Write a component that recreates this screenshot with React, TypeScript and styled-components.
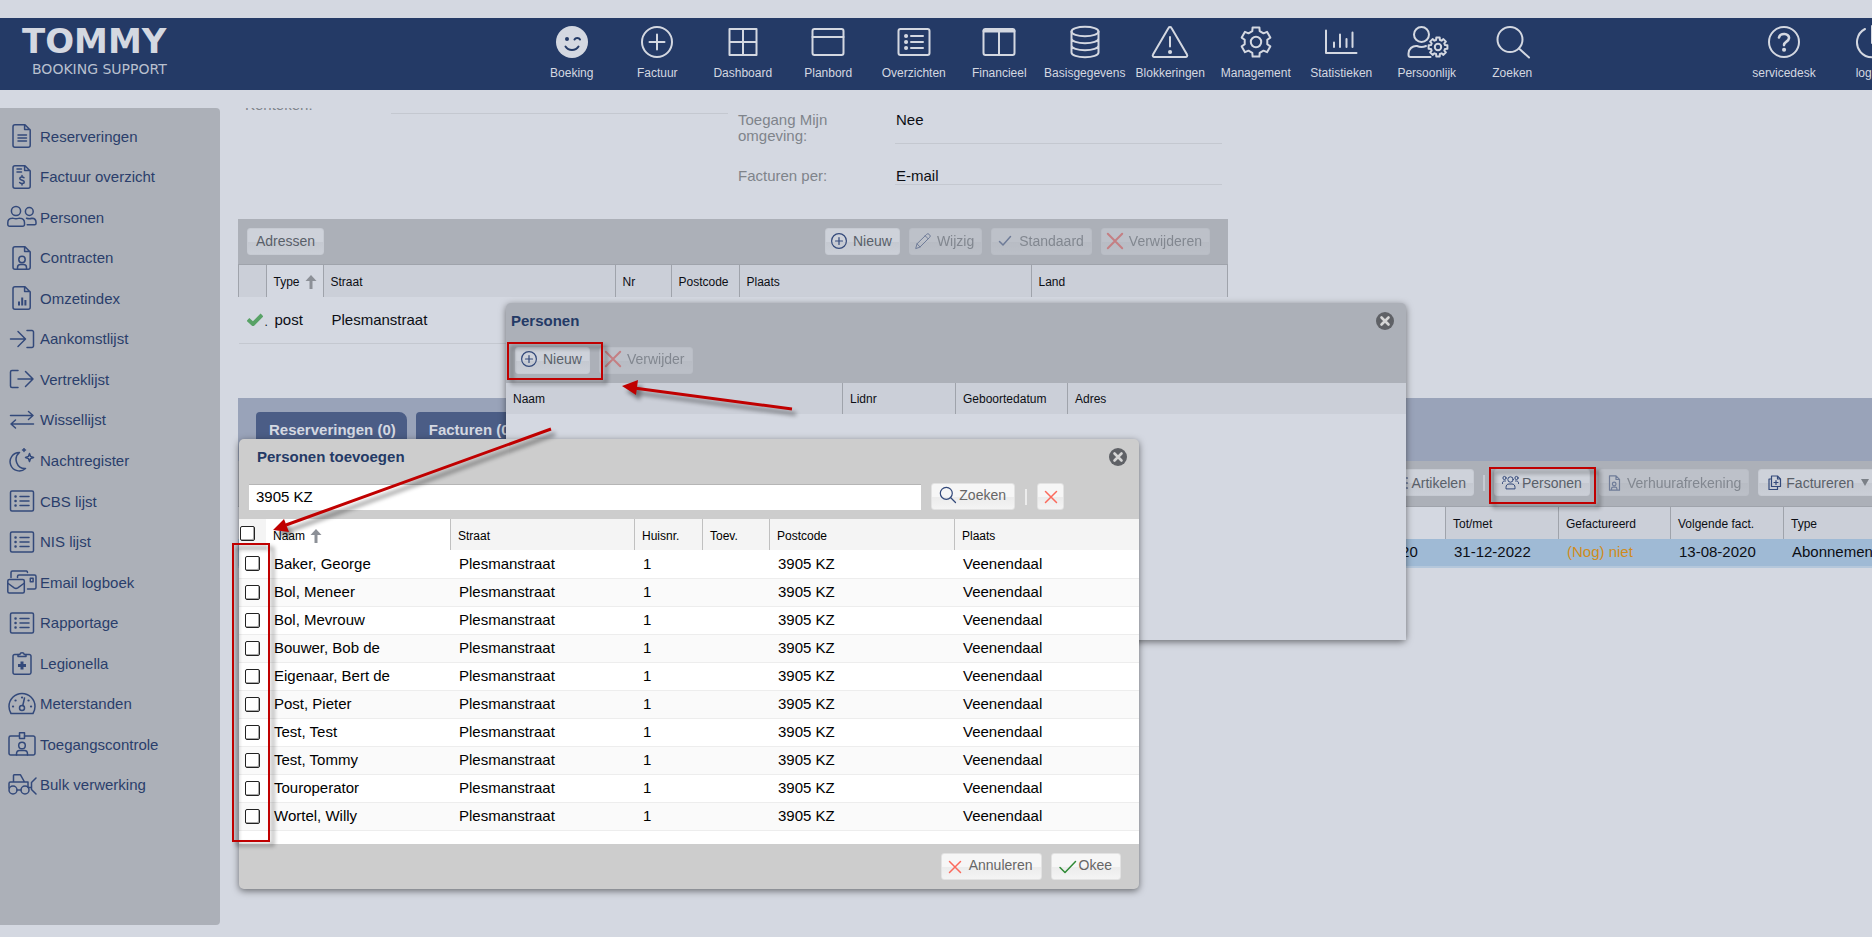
import React from "react";
import styled, { createGlobalStyle, css } from "styled-components";

const c = {
  page: "#d4d8e1",
  navy: "#243a66",
  grey: "#acb0b8",
  head: "#cbcfd8",
  line: "#c4c8d0",
  colLine: "#9fa3ab",
  icon: "#33497a",
  label: "#7f848b",
  red: "#c00000",
};

const GlobalStyle = createGlobalStyle`
  *, *::before, *::after { box-sizing: border-box; }
  html, body { margin: 0; background: ${c.page}; }
  body { font-family: "Liberation Sans", Arial, sans-serif; font-size: 15px; color: #0c0e14; overflow: hidden; }
  button, input { font-family: inherit; margin: 0; }
  ul { list-style: none; margin: 0; padding: 0; }
  h2 { margin: 0; }
`;

/* ---------- page frame ---------- */

const Page = styled.div`
  position: relative;
  min-height: 100vh;
  display: flex;
  flex-direction: column;
  padding: 18px 0 12px;
  overflow: hidden;
`;

const Header = styled.header`
  display: flex;
  height: 72px;
  background: ${c.navy};
  color: ${c.page};
`;

const Logo = styled.a`
  flex: 0 0 529px;
  padding: 3px 0 0 22px;
  display: flex;
  flex-direction: column;
  color: ${c.page};
  text-decoration: none;
  font-family: "DejaVu Sans", sans-serif;
`;

const LogoName = styled.span`
  font-size: 34px;
  line-height: 40px;
  font-weight: 700;
`;

const LogoTag = styled.span`
  padding-left: 10px;
  font-size: 14px;
  line-height: 17px;
  color: #b9c0cf;
`;

const Nav = styled.nav`
  flex: 0 1 1026px;
  display: grid;
  grid-template-columns: repeat(12, 1fr);
`;

const UtilityNav = styled.nav`
  flex: 0 0 172px;
  display: grid;
  grid-template-columns: 1fr 1fr;
  margin: 0 -41px 0 auto;
`;

const NavLink = styled.a`
  display: flex;
  flex-direction: column;
  align-items: center;
  gap: 8px;
  padding-top: 8px;
  color: inherit;
  text-decoration: none;
  font-size: 12px;
  line-height: 14px;
  white-space: nowrap;
`;

const Body = styled.div`
  flex: 1;
  display: flex;
  gap: 18px;
  padding-top: 18px;
`;

const Sidebar = styled.aside`
  flex: 0 0 220px;
  padding: 8px 0 0 7px;
  border-radius: 0 4px 4px 0;
  background: ${c.grey};
`;

const Menu = styled.ul`
  min-height: 689px;
  display: grid;
  grid-auto-rows: 1fr;
`;

const MenuLink = styled.a`
  height: 100%;
  display: flex;
  align-items: center;
  gap: 3px;
  color: #2a3e6b;
  text-decoration: none;
`;

const Main = styled.main`
  flex: 1;
  min-width: 0;
  overflow: hidden;
`;

/* ---------- svg base ---------- */

const Svg = styled.svg<{ $tone?: string; $w?: number }>`
  display: block;
  flex: none;
  fill: none;
  stroke: ${(p) => p.$tone || "currentColor"};
  stroke-width: ${(p) => p.$w || 2};
  stroke-linecap: round;
  stroke-linejoin: round;
`;

function gear(cx: number, cy: number, ro: number, ri: number, n: number) {
  const pts: string[] = [];
  const w1 = 60 / n + 3;
  const w2 = 90 / n + 4;
  for (let i = 0; i < n; i++) {
    const a = (360 / n) * i - 90;
    [[ri, -w2], [ro, -w1], [ro, w1], [ri, w2]].forEach(([r, d]) => {
      const t = ((a + d) * Math.PI) / 180;
      pts.push(`${(cx + r * Math.cos(t)).toFixed(1)} ${(cy + r * Math.sin(t)).toFixed(1)}`);
    });
  }
  return `M${pts.join("L")}Z`;
}

const navIcons: Record<string, React.ReactNode> = {
  wink: (
    <>
      <circle cx="20" cy="16" r="16" fill={c.page} stroke="none" />
      <circle cx="15" cy="13" r="2" fill={c.navy} stroke="none" />
      <path d="M22.5 13.5c1-2 4.500-2 5.500 0M13.500 20.500c3 4.600 10 4.600 13 0" stroke={c.navy} />
    </>
  ),
  plus: <><circle cx="20" cy="16" r="15" /><path d="M20 8.500v15M12.500 16h15" /></>,
  grid: <path d="M6.500 3h27v26h-27zM20 3v26M6.500 16h27" />,
  board: <><rect x="4.500" y="3" width="31" height="26" rx="2" /><path d="M4.500 11h31" /></>,
  list: (
    <>
      <rect x="4.500" y="3" width="31" height="26" rx="2" />
      <path d="M17 10h12M17 16h12M17 22h12" />
      <path d="M12 10h.1M12 16h.1M12 22h.1" strokeWidth="4" />
    </>
  ),
  columns: <><rect x="4.500" y="3" width="31" height="26" rx="2" /><path d="M5 5h30" strokeWidth="3" /><path d="M20 5v24" /></>,
  db: (
    <>
      <ellipse cx="20" cy="5.500" rx="13.500" ry="4.700" />
      <path d="M6.500 5.500v21c0 2.600 6 4.700 13.500 4.700s13.500-2.100 13.500-4.700v-21M6.500 12.500c0 2.600 6 4.700 13.500 4.700s13.500-2.100 13.500-4.700M6.500 19.500c0 2.600 6 4.700 13.500 4.700s13.500-2.100 13.500-4.700" />
    </>
  ),
  warn: <><path d="M18.500 2 3 28.500A1.600 1.600 0 0 0 4.500 31h31a1.600 1.600 0 0 0 1.500-2.500L21.500 2a1.700 1.700 0 0 0-3 0zM20 11v9.500" /><path d="M20 26h.1" strokeWidth="4" /></>,
  gear: <><path d={gear(20, 16, 15, 11.5, 6)} /><circle cx="20" cy="16" r="5.200" /></>,
  stats: <path d="M5 4.500V27h30.500M13 16.500v4.500M19 8.500V21M25.500 13v8M31.500 6.500V21" />,
  person: (
    <>
      <circle cx="14.500" cy="8.500" r="7.500" />
      <path d="M19 20c-3 1.400-6 1.400-9 0-4.500-.5-8.500 3-8.500 7.500V29a2 2 0 0 0 2 2h20" />
      <path d={gear(31, 21, 9.6, 7.3, 8)} />
      <circle cx="31" cy="21" r="3.200" />
    </>
  ),
  search: <><circle cx="18" cy="13.500" r="12.500" /><path d="m27 22.500 10 9" /></>,
  help: <><circle cx="20" cy="16" r="15" /><path d="M15 11.500c1-5 10.500-4.500 10 .6-.3 3.600-5 3.400-5 7" strokeWidth="2.600" /><path d="M20 23.800h.1" strokeWidth="4" /></>,
  power: <path d="M15 3a15 15 0 1 0 14 0M22 0v17" />,
};

const NavIcon = ({ name }: { name: string }) => (
  <Svg width="40" height="32" viewBox="0 0 40 32" overflow="visible" aria-hidden="true">{navIcons[name]}</Svg>
);

const sheet = "M8 .8h10l5.200 5.200v15.200a2 2 0 0 1-2 2H8a2 2 0 0 1-2-2V2.800a2 2 0 0 1 2-2zM17.600 1v4.600H23";

const listIcon = (
  <>
    <rect x="3.500" y="2" width="23" height="20" rx="1.500" />
    <path d="M13 7.500h9M13 12h9M13 16.500h9" />
    <path d="M8.500 7.500h.1M8.500 12h.1M8.500 16.500h.1" strokeWidth="2.500" />
  </>
);

const menuIcons: Record<string, React.ReactNode> = {
  file: <path d={`${sheet}M11 11h8.500M11 14h8.500M11 17h8.500`} />,
  invoice: <path d={`${sheet}M10 4h4.500M10 7h4.500M17 12.700c-1.200-1.300-4.300-.9-4.200.9.100 2 4.500 1.300 4.500 3.300 0 2-3.300 2.200-4.700.7M15 10.500v1.500M15 18.500V20`} />,
  people: (
    <>
      <circle cx="9" cy="6" r="4.600" />
      <path d="M5 13.200c1-.2 1.800.5 4 .5s3-.7 4-.5c2.800.1 4.500 2.100 4.500 4.500v1.800a1.800 1.800 0 0 1-1.800 1.800H2.600a1.800 1.800 0 0 1-1.800-1.800v-1.800c0-2.400 1.700-4.400 4.200-4.500z" />
      <circle cx="22.300" cy="6.500" r="3.900" />
      <path d="M19.500 13.200c1.600.6 4 .6 5.500 0 2.300.1 4 1.800 4 4v1.300a1.300 1.300 0 0 1-1.300 1.300h-7.500" />
    </>
  ),
  contract: <><path d={`${sheet}M10.500 23v-1.500c0-1.800 1.200-3 3-3h3c1.800 0 3 1.200 3 3V23`} /><circle cx="15" cy="13.500" r="3.200" /></>,
  chart: <><path d={sheet} /><path d="M12 19.500v-4M15.200 19.500v-8M18.400 19.500v-5.500" strokeWidth="2" strokeLinecap="butt" /></>,
  enter: <path d="M3.500 12H18M11 4.500l7.500 7.500-7.500 7.500M20 3.500h5a1.500 1.500 0 0 1 1.500 1.500v14a1.500 1.500 0 0 1-1.500 1.500h-5" />,
  leave: <path d="M11 12h15M18.500 4.500 26 12l-7.500 7.500M11 3.500H5A1.500 1.500 0 0 0 3.500 5v14A1.500 1.500 0 0 0 5 20.500h6" />,
  swap: <path d="M3.500 7.500h22.500M21.500 3.500l4.500 4-4.500 4M26.500 16H4M8.500 12 4 16l4.500 4" />,
  moon: <path d="M12.500 4.500A9.200 9.200 0 1 0 18.500 20.500 9 9 0 0 1 12.500 4.500zM22.500 5.500l1.100 2.900 2.900 1.100-2.900 1.100-1.100 2.900-1.100-2.900-2.900-1.100 2.900-1.100zM17 .5v3M15.500 2h3" />,
  list: listIcon,
  mail: (
    <>
      <rect x=".8" y="9.500" width="16.500" height="13.500" rx="1.500" />
      <path d="m1.200 13.500 6 4.300c1.200.8 2.400.8 3.600 0l6-4.300M4 7.500V2.500A1.500 1.500 0 0 1 5.500 1h14A1.500 1.500 0 0 1 20.500 2.500M10.500 7.500V6.500A1.500 1.500 0 0 1 12 5h15.500A1.500 1.500 0 0 1 29 6.500v11a1.500 1.500 0 0 1-1.500 1.500H20.500" />
      <path d="M23.300 8.300h2.800v3.500h-2.800z" />
    </>
  ),
  medical: (
    <>
      <path d="M11 3.500H7.700A1.700 1.700 0 0 0 6 5.200v16.300a1.700 1.700 0 0 0 1.700 1.700h14.600a1.700 1.700 0 0 0 1.700-1.700V5.200a1.700 1.700 0 0 0-1.700-1.700H19" />
      <path d="M11 5.500v-2h1.800a2.300 2.300 0 0 1 4.500 0H19v2z" />
      <path d="M15 10.500v8M11 14.500h8" strokeWidth="3" strokeLinecap="butt" />
    </>
  ),
  meter: (
    <>
      <path d="M4 21.500h22c1.300-2.200 2-4.300 2-7A13 13 0 0 0 2 14.500c0 2.700.7 4.800 2 7zM15.800 13.500 17.500 6" />
      <circle cx="15" cy="16" r="2.500" />
      <path d="M6 14.500h.1M8.500 8.500h.1M15 5.500h.1M21.500 8.500h.1M24 14.500h.1" strokeWidth="2.200" />
    </>
  ),
  badge: (
    <>
      <path d="M12.500 4H3.700A1.700 1.700 0 0 0 2 5.700v15.600A1.700 1.700 0 0 0 3.700 23h22.600a1.700 1.700 0 0 0 1.700-1.700V5.700A1.700 1.700 0 0 0 26.300 4h-8.800" />
      <path d="M12.500.8h5v5.700h-5zM9.500 23v-1c0-2 1.200-3.500 3-3.500h5c1.800 0 3 1.500 3 3.500v1" />
      <circle cx="15" cy="13.500" r="3.300" />
    </>
  ),
  tractor: (
    <>
      <circle cx="6" cy="17" r="4" />
      <circle cx="18" cy="17" r="4" />
      <path d="M10 17h4M2 15V10.500A1.500 1.500 0 0 1 3.500 9H21v5.500M6.500 9V2.500A1 1 0 0 1 7.500 1.800h6L17.500 9M29 5l-4.500 4.500v7L29 21M22 14.500h2.500" />
    </>
  ),
};

/* ---------- buttons ---------- */

const ButtonBox = styled.button<{ $lit?: boolean; $tight?: boolean; $plain?: boolean }>`
  height: 27px;
  display: inline-flex;
  align-items: center;
  gap: ${(p) => (p.$tight ? 3 : 6)}px;
  padding: 0 ${(p) => (p.$plain || p.$lit ? 8 : 7)}px 0 ${(p) => (p.$plain ? 8 : p.$tight ? 7 : 5)}px;
  border: 1px solid ${(p) => (p.$lit ? "#e2e2e2" : "#c6cad2")};
  border-radius: 3px;
  background: ${(p) =>
    p.$lit
      ? "linear-gradient(#f6f6f6 0 50%, #ececec 54%, #f4f4f4)"
      : "linear-gradient(#ced2da 0 50%, #c5c9d1 54%, #cbcfd7)"};
  color: ${(p) => (p.$lit ? "#666" : "#596069")};
  font-size: 14px;
  line-height: 16px;
  white-space: nowrap;
  &:disabled {
    opacity: 0.5;
  }
`;

const smallIcons: Record<string, React.ReactNode> = {
  plus: <><circle cx="8" cy="8" r="7.400" /><path d="M8 4.500v7M4.500 8h7" /></>,
  pencil: <path d="M.8 15.200 2 10.800 11.700 1.300a1.700 1.700 0 0 1 2.400 0l.6.6a1.700 1.700 0 0 1 0 2.400L5 14zM10.200 2.800l3 3M2 10.800 5 14" />,
  check: <path d="m2.500 8.500 3.500 3.500 7.500-8.500" />,
  cross: <path d="m.8.8 14.400 14.400M15.200.8.800 15.200" />,
  crossSmall: <path d="m2.500 4.500 11 11M13.500 4.500l-11 11" />,
  search: <><circle cx="6.800" cy="6.300" r="6" /><path d="m11 10.500 5 5" /></>,
  tick: <path d="m.5 10.500 5 5L16 4.500" />,
  lines: <path d="M2 3h14M2 8h14M2 13h14" />,
  group: (
    <>
      <circle cx="8" cy="4.500" r="2.700" /><circle cx="2" cy="3" r="1.600" /><circle cx="14" cy="3" r="1.600" />
      <path d="M3.500 13.500v-1.200c0-2 1.300-3.300 3-3.300h3c1.700 0 3 1.300 3 3.300v1.200zM0 8.500V8c0-1.200.8-2 2-2h1M16 8.500V8c0-1.200-.8-2-2-2h-1" />
    </>
  ),
  doc: <><path d="M2 .8h6.500l3.500 3.500v10.900H2zM8.500 1v3.500H12M4 15v-1.200c0-1 .7-1.600 1.600-1.600h2.200c1 0 1.600.6 1.600 1.600V15" /><circle cx="6.700" cy="9" r="1.800" /></>,
  copy: <path d="M5 1h6l3 3v7.500H5zM11 1v3h3M5 4H2.500v10.500H11v-3M9.500 5.500v4M7.500 7.500h4" />,
};

const SmallIcon = ({ name, tone = "#33497a", w = 1.2, big }: { name: string; tone?: string; w?: number; big?: boolean }) => (
  <Svg $tone={tone} $w={w} width={big ? 17 : 16} height="16" viewBox="0 0 16 16" overflow="visible" aria-hidden="true">
    {smallIcons[name]}
  </Svg>
);

const IconButton = styled(ButtonBox)`
  width: 27px;
  padding: 0;
  justify-content: center;
`;

const Separator = styled.span<{ $lit?: boolean }>`
  width: 2px;
  height: 16px;
  background: ${(p) => (p.$lit ? "#ececec" : "#c5c9d1")};
`;

/* ---------- tables ---------- */

const Table = styled.table`
  width: 100%;
  border-collapse: collapse;
  table-layout: fixed;
`;

const Th = styled.th<{ $sorted?: boolean; $lit?: boolean; $edge?: boolean; $flat?: boolean }>`
  height: ${(p) => (p.$lit || p.$flat ? 31 : 32)}px;
  padding: ${(p) => (p.$flat ? 0 : 2)}px 0 0 7px;
  background: ${(p) =>
    p.$lit ? (p.$sorted ? "#ffffff" : "#f4f4f4") : p.$sorted ? c.page : c.head};
  font-size: 12px;
  line-height: 16px;
  font-weight: 400;
  text-align: left;
  white-space: nowrap;
  ${(p) => p.$edge !== false && css`box-shadow: inset -1px 0 0 ${p.$lit ? "#c0c0c0" : c.colLine};`}
`;

const Sort = styled(Svg)`
  display: inline-block;
  vertical-align: -3px;
  margin-left: 5px;
`;

const SortArrow = () => (
  <Sort $tone="#8c9097" $w={3} width="12" height="14" viewBox="0 0 12 14" aria-hidden="true">
    <path d="M6 5v9" strokeLinecap="butt" />
    <path d="M6 0 .5 6h11z" fill="#8c9097" stroke="none" />
  </Sort>
);

const Td = styled.td`
  padding: 0 0 0 8px;
  line-height: 18px;
  white-space: nowrap;
`;

/* ---------- form ---------- */

const Form = styled.div`
  display: grid;
  grid-template-columns: 483px 484px;
  column-gap: 10px;
  padding-left: 7px;
  margin-top: -11px;
`;

const Fields = styled.dl<{ $lower?: boolean }>`
  margin: 0;
  padding-top: ${(p) => (p.$lower ? 15 : 0)}px;
  display: flex;
  flex-direction: column;
  gap: 24px;
`;

const Field = styled.div<{ $labelWidth: number }>`
  display: grid;
  grid-template-columns: ${(p) => p.$labelWidth}px 1fr;
  line-height: 16px;
`;

const FieldLabel = styled.dt`
  color: ${c.label};
  padding-right: 40px;
`;

const FieldValue = styled.dd`
  margin: 0;
  padding-left: 1px;
  min-height: 17px;
  border-bottom: 1px solid ${c.line};
`;

/* ---------- cards ---------- */

const Card = styled.section`
  max-width: 990px;
  margin-top: 34px;
`;

const Toolbar = styled.div`
  display: flex;
  align-items: center;
  gap: 9px;
  height: 46px;
  padding: 0 18px 1px 9px;
  background: ${c.grey};
  border-bottom: 1px solid ${c.colLine};
`;

const Push = styled.span`
  margin-left: auto;
`;

const AddressRow = styled.tr`
  height: 46px;
  border-bottom: 1px solid ${c.line};
`;

const AddressHead = styled.tr`
  border-left: 1px solid ${c.colLine};
`;

const MarkCell = styled.div`
  display: flex;
  align-items: flex-end;
  gap: 2px;
  font-size: 12px;
  line-height: 10px;
`;

const TabPanel = styled.section`
  margin: 54px -16px 0 0;
`;

const Tabs = styled.div`
  display: flex;
  gap: 9px;
  height: 63px;
  padding: 14px 18px 0;
  background: #99a3b9;
`;

const Tab = styled.button`
  padding: 0 11px 13px 13px;
  border: 0;
  border-radius: 4px 8px 0 0;
  background: #4b5d86;
  color: ${c.page};
  font-size: 15px;
  font-weight: 700;
`;

const ContractBar = styled(Toolbar)`
  justify-content: flex-end;
  gap: 9px;
  padding: 0 11px 1px 0;
`;

const SelectedRow = styled.tr`
  height: 28px;
  background: #9fbad5;
  border-bottom: 2px solid #b4c7db;
`;

const Pending = styled.span`
  color: #d08c1c;
`;

const Caret = styled.span`
  margin-left: 4px;
  border: 4px solid transparent;
  border-top: 7px solid #7b8087;
  border-bottom: 0;
`;

/* ---------- windows ---------- */

const Window = styled.section<{ $lit?: boolean }>`
  position: absolute;
  width: 900px;
  border-radius: 5px;
  background: ${(p) => (p.$lit ? "#cdcdcd" : c.grey)};
  box-shadow: 0 2px 7px rgba(0, 0, 0, 0.5);
`;

const PersonsWindow = styled(Window)`
  left: 506px;
  top: 303px;
`;

const AddWindow = styled(Window)`
  left: 239px;
  top: 439px;
  color: #000;
`;

const TitleBar = styled.div<{ $indent: number }>`
  display: flex;
  align-items: center;
  justify-content: space-between;
  height: 36px;
  padding: 0 12px 0 ${(p) => p.$indent}px;
`;

const Title = styled.h2`
  color: #243a66;
  font-size: 15px;
  line-height: 18px;
`;

const CloseButton = styled.button`
  padding: 0;
  border: 0;
  background: none;
  color: #5f6166;
`;

const Close = () => (
  <CloseButton type="button" aria-label="Sluiten">
    <Svg width="18" height="18" viewBox="0 0 18 18">
      <circle cx="9" cy="9" r="9" fill="currentColor" stroke="none" />
      <path d="m5.500 5.500 7 7M12.500 5.500l-7 7" stroke="#d6d6d6" strokeWidth="2.600" />
    </Svg>
  </CloseButton>
);

const WindowBar = styled.div<{ $search?: boolean }>`
  display: flex;
  align-items: center;
  gap: ${(p) => (p.$search ? 10 : 9)}px;
  height: 44px;
  padding: 0 ${(p) => (p.$search ? 75 : 9)}px 1px ${(p) => (p.$search ? 10 : 9)}px;
  ${ButtonBox} {
    padding-bottom: 3px;
  }
`;

const WindowBody = styled.div`
  min-height: 257px;
  background: ${c.page};
`;

const SearchInput = styled.input`
  flex: 1;
  min-width: 0;
  height: 26px;
  padding: 0 7px 2px;
  border: 0;
  border-top: 1px solid #b5b5b5;
  background: #fff;
  color: #000;
  font-size: 15px;
`;

const Results = styled.div`
  padding-bottom: 13px;
  background: #fff;
`;

const ResultRow = styled.tr`
  height: 28px;
  border-bottom: 1px solid #ededed;
  &:nth-child(even) { background: #fafafa; }
`;

const CheckTh = styled(Th)`
  padding: 0 0 2px 1px;
`;

const CheckTd = styled(Td)`
  padding: 0 0 0 6px;
`;

const Check = styled.input`
  appearance: none;
  display: block;
  width: 15px;
  height: 15px;
  border: 1px solid #222;
  border-radius: 2px;
  background: #fff;
  box-shadow: inset -1px -1px 0 #a8a8a8;
`;

const Footer = styled.div`
  display: flex;
  align-items: center;
  justify-content: flex-end;
  gap: 9px;
  height: 45px;
  padding: 0 18px;
  ${ButtonBox} {
    padding-bottom: 3px;
  }
`;

/* ---------- annotations on top of the page ---------- */

const Marker = styled.div<{ $x: number; $y: number; $w: number; $h: number }>`
  position: absolute;
  left: ${(p) => p.$x}px;
  top: ${(p) => p.$y}px;
  width: ${(p) => p.$w}px;
  height: ${(p) => p.$h}px;
  border: 2px solid ${c.red};
  filter: drop-shadow(4px 4px 2px rgba(0, 0, 0, 0.45));
  pointer-events: none;
`;

const Arrows = styled.svg`
  position: absolute;
  left: 260px;
  top: 370px;
  stroke: ${c.red};
  stroke-width: 3;
  filter: drop-shadow(4px 5px 2px rgba(0, 0, 0, 0.45));
  pointer-events: none;
`;

/* ---------- data ---------- */

const nav = [
  ["wink", "Boeking"], ["plus", "Factuur"], ["grid", "Dashboard"], ["board", "Planbord"],
  ["list", "Overzichten"], ["columns", "Financieel"], ["db", "Basisgegevens"], ["warn", "Blokkeringen"],
  ["gear", "Management"], ["stats", "Statistieken"], ["person", "Persoonlijk"], ["search", "Zoeken"],
];
const utilities = [["help", "servicedesk"], ["power", "loguit"]];

const menu = [
  ["file", "Reserveringen"], ["invoice", "Factuur overzicht"], ["people", "Personen"],
  ["contract", "Contracten"], ["chart", "Omzetindex"], ["enter", "Aankomstlijst"],
  ["leave", "Vertreklijst"], ["swap", "Wissellijst"], ["moon", "Nachtregister"],
  ["list", "CBS lijst"], ["list", "NIS lijst"], ["mail", "Email logboek"],
  ["list", "Rapportage"], ["medical", "Legionella"], ["meter", "Meterstanden"],
  ["badge", "Toegangscontrole"], ["tractor", "Bulk verwerking"],
];

const people = [
  "Baker, George", "Bol, Meneer", "Bol, Mevrouw", "Bouwer, Bob de", "Eigenaar, Bert de",
  "Post, Pieter", "Test, Test", "Test, Tommy", "Touroperator", "Wortel, Willy",
];

const Cols = ({ widths }: { widths: (number | null)[] }) => (
  <colgroup>
    {widths.map((w, i) => <col key={i} width={w ?? undefined} />)}
  </colgroup>
);

const TopLink = ({ icon, text }: { icon: string; text: string }) => (
  <NavLink href="#"><NavIcon name={icon} />{text}</NavLink>
);

export default function App() {
  return (
    <Page>
      <GlobalStyle />
      <Header>
        <Logo href="#">
          <LogoName>TOMMY</LogoName>
          <LogoTag>BOOKING SUPPORT</LogoTag>
        </Logo>
        <Nav>{nav.map(([i, t]) => <TopLink key={t} icon={i} text={t} />)}</Nav>
        <UtilityNav>{utilities.map(([i, t]) => <TopLink key={t} icon={i} text={t} />)}</UtilityNav>
      </Header>

      <Body>
        <Sidebar>
          <Menu>
            {menu.map(([i, t]) => (
              <li key={t}>
                <MenuLink href="#">
                  <Svg $tone={c.icon} $w={1.5} width="30" height="24" viewBox="0 0 30 24" aria-hidden="true">{menuIcons[i]}</Svg>
                  {t}
                </MenuLink>
              </li>
            ))}
          </Menu>
        </Sidebar>

        <Main>
          <Form>
            <Fields>
              <Field $labelWidth={146}>
                <FieldLabel>Kenteken:</FieldLabel>
                <FieldValue />
              </Field>
            </Fields>
            <Fields $lower>
              <Field $labelWidth={157}>
                <FieldLabel>Toegang Mijn omgeving:</FieldLabel>
                <FieldValue>Nee</FieldValue>
              </Field>
              <Field $labelWidth={157}>
                <FieldLabel>Facturen per:</FieldLabel>
                <FieldValue>E-mail</FieldValue>
              </Field>
            </Fields>
          </Form>

          <Card>
            <Toolbar>
              <ButtonBox type="button" $plain>Adressen</ButtonBox>
              <Push />
              <ButtonBox type="button"><SmallIcon name="plus" />Nieuw</ButtonBox>
              <ButtonBox type="button" disabled><SmallIcon name="pencil" w={1} />Wijzig</ButtonBox>
              <ButtonBox type="button" disabled><SmallIcon name="check" w={1.5} />Standaard</ButtonBox>
              <ButtonBox type="button" disabled><SmallIcon name="cross" tone="#dd5050" w={2} />Verwijderen</ButtonBox>
            </Toolbar>
            <Table>
              <Cols widths={[28, 57, 292, 56, 68, 292, null]} />
              <thead>
                <AddressHead>
                  <Th aria-label="Standaard" />
                  <Th $sorted>Type<SortArrow /></Th>
                  <Th>Straat</Th>
                  <Th>Nr</Th>
                  <Th>Postcode</Th>
                  <Th>Plaats</Th>
                  <Th>Land</Th>
                </AddressHead>
              </thead>
              <tbody>
                <AddressRow>
                  <Td>
                    <MarkCell>
                      <Svg $tone="#58a266" $w={4} width="16" height="14" viewBox="0 0 16 14" aria-hidden="true">
                        <path d="m1 6.500 5 4.500 9-9" strokeLinecap="butt" />
                      </Svg>
                      .
                    </MarkCell>
                  </Td>
                  <Td>post</Td>
                  <Td>Plesmanstraat</Td>
                  <Td /><Td /><Td /><Td />
                </AddressRow>
              </tbody>
            </Table>
          </Card>

          <TabPanel>
            <Tabs>
              <Tab type="button">Reserveringen (0)</Tab>
              <Tab type="button">Facturen (0)</Tab>
            </Tabs>
            <ContractBar>
              <ButtonBox type="button" $tight><SmallIcon name="lines" big />Artikelen</ButtonBox>
              <Separator />
              <ButtonBox type="button" $tight><SmallIcon name="group" w={1} big />Personen</ButtonBox>
              <ButtonBox type="button" $tight disabled><SmallIcon name="doc" big />Verhuurafrekening</ButtonBox>
              <ButtonBox type="button" $tight><SmallIcon name="copy" big />Factureren<Caret /></ButtonBox>
            </ContractBar>
            <Table>
              <Cols widths={[null, 113, 113, 112, 113, 104]} />
              <thead>
                <tr>
                  <Th />
                  <Th $sorted />
                  <Th>Tot/met</Th>
                  <Th>Gefactureerd</Th>
                  <Th>Volgende fact.</Th>
                  <Th>Type</Th>
                </tr>
              </thead>
              <tbody>
                <SelectedRow>
                  <Td />
                  <Td>13-08-2020</Td>
                  <Td>31-12-2022</Td>
                  <Td><Pending>(Nog) niet</Pending></Td>
                  <Td>13-08-2020</Td>
                  <Td>Abonnement</Td>
                </SelectedRow>
              </tbody>
            </Table>
          </TabPanel>
        </Main>
      </Body>

      <PersonsWindow role="dialog" aria-label="Personen">
        <TitleBar $indent={5}>
          <Title>Personen</Title>
          <Close />
        </TitleBar>
        <WindowBar>
          <ButtonBox type="button"><SmallIcon name="plus" />Nieuw</ButtonBox>
          <ButtonBox type="button" disabled><SmallIcon name="cross" tone="#dd5050" w={2} />Verwijder</ButtonBox>
        </WindowBar>
        <WindowBody>
          <Table>
            <Cols widths={[337, 113, 112, null]} />
            <thead>
              <tr>
                <Th $flat>Naam</Th>
                <Th $flat>Lidnr</Th>
                <Th $flat>Geboortedatum</Th>
                <Th $flat $edge={false}>Adres</Th>
              </tr>
            </thead>
          </Table>
        </WindowBody>
      </PersonsWindow>

      <AddWindow $lit role="dialog" aria-label="Personen toevoegen">
        <TitleBar $indent={18}>
          <Title>Personen toevoegen</Title>
          <Close />
        </TitleBar>
        <WindowBar $search>
          <SearchInput type="text" aria-label="Zoekterm" defaultValue="3905 KZ" />
          <ButtonBox type="button" $lit $tight><SmallIcon name="search" big />Zoeken</ButtonBox>
          <Separator $lit />
          <IconButton type="button" $lit aria-label="Wissen"><SmallIcon name="crossSmall" tone="#fb6a5c" w={1.5} /></IconButton>
        </WindowBar>
        <Results>
          <Table>
            <Cols widths={[27, 185, 184, 68, 67, 185, null]} />
            <thead>
              <tr>
                <CheckTh $lit $edge={false}><Check type="checkbox" aria-label="Alles selecteren" /></CheckTh>
                <Th $lit $sorted>Naam<SortArrow /></Th>
                <Th $lit>Straat</Th>
                <Th $lit>Huisnr.</Th>
                <Th $lit>Toev.</Th>
                <Th $lit>Postcode</Th>
                <Th $lit $edge={false}>Plaats</Th>
              </tr>
            </thead>
            <tbody>
              {people.map((name) => (
                <ResultRow key={name}>
                  <CheckTd><Check type="checkbox" aria-label={name} /></CheckTd>
                  <Td>{name}</Td>
                  <Td>Plesmanstraat</Td>
                  <Td>1</Td>
                  <Td />
                  <Td>3905 KZ</Td>
                  <Td>Veenendaal</Td>
                </ResultRow>
              ))}
            </tbody>
          </Table>
        </Results>
        <Footer>
          <ButtonBox type="button" $lit><SmallIcon name="crossSmall" tone="#fb6a5c" w={1.5} />Annuleren</ButtonBox>
          <ButtonBox type="button" $lit $tight><SmallIcon name="tick" tone="#2f8a35" w={1.5} big />Okee</ButtonBox>
        </Footer>
      </AddWindow>

      <Marker $x={232} $y={543} $w={38} $h={299} />
      <Marker $x={507} $y={342} $w={96} $h={38} />
      <Marker $x={1489} $y={467} $w={107} $h={37} />
      <Arrows width="550" height="180" viewBox="0 0 550 180" aria-hidden="true">
        <path d="M291 59 26 155M532 39 374 18" />
        <path d="M13 160 24 149 29 162zM362 16 378 10 376 25z" fill={c.red} stroke="none" />
      </Arrows>
    </Page>
  );
}
